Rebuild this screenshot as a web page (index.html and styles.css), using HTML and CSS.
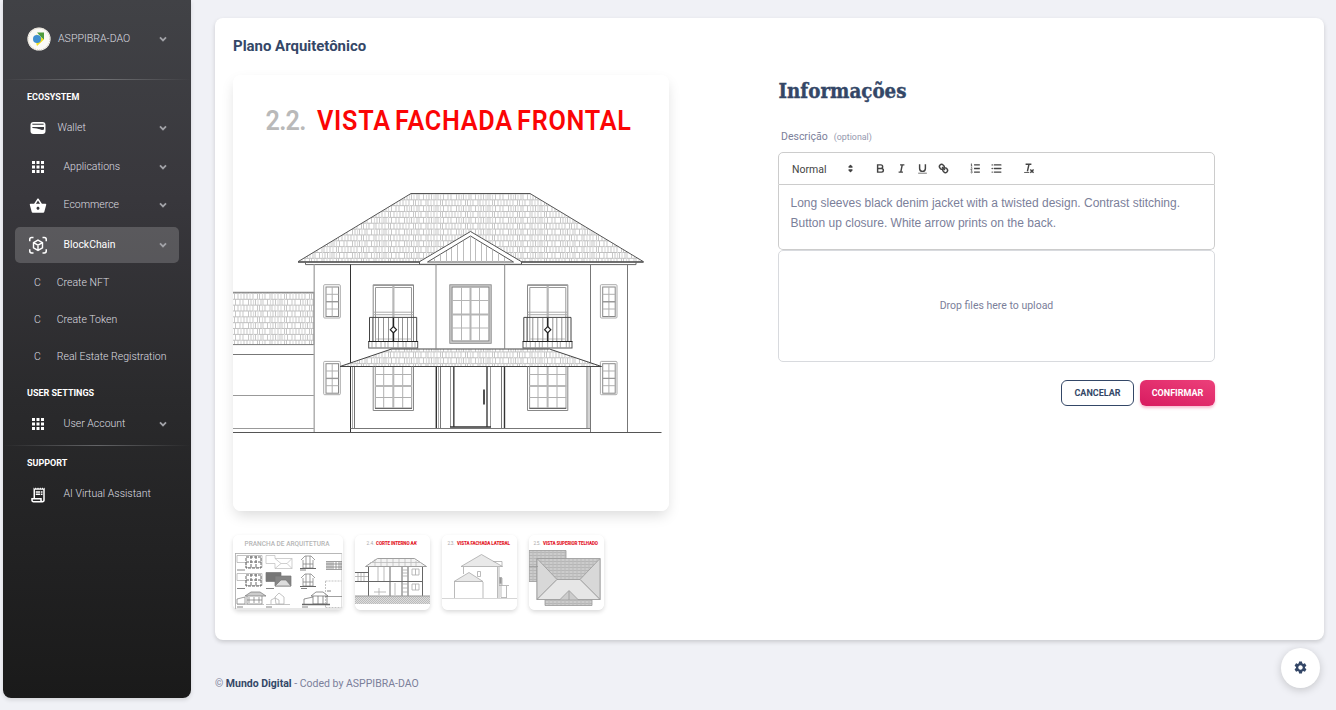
FILE: index.html
```
<!DOCTYPE html>
<html lang="pt">
<head>
<meta charset="utf-8">
<title>Plano Arquitetônico</title>
<link rel="stylesheet" href="styles.css">
</head>
<body>
<svg class="defs" width="0" height="0" aria-hidden="true">
  <defs>
    <symbol id="chev" viewBox="0 0 10 10"><path d="M2 3.400 5 6.400 8 3.400" fill="none" stroke="currentColor" stroke-width="1.800"/></symbol>
    <symbol id="apps" viewBox="0 0 24 24"><path fill="currentColor" d="M4 8h4V4H4v4zm6 12h4v-4h-4v4zm-6 0h4v-4H4v4zm0-6h4v-4H4v4zm6 0h4v-4h-4v4zm6-10v4h4V4h-4zm-6 4h4V4h-4v4zm6 6h4v-4h-4v4zm0 6h4v-4h-4v4z"/></symbol>
  </defs>
</svg>
<div class="app">
  <aside class="sidebar">
    <div class="profile">
      <svg class="avatar" viewBox="0 0 24 24"><circle cx="12" cy="12" r="11.600" fill="#fbfaf6"/><circle cx="12" cy="12" r="10.800" fill="none" stroke="#cfc4b2" stroke-width="1" stroke-dasharray="1 1"/><path fill="#4f9b3d" d="M10 5.500h7v7.500l-3-3z"/><path fill="#f4e01e" d="m9 7 8 5.500-7 6.500-.8-2.500 3.500-4z"/><circle cx="10" cy="12" r="4" fill="#3f8fd0"/></svg>
      <span class="label">ASPPIBRA-DAO</span><svg class="chev"><use href="#chev"/></svg>
    </div>
    <hr>
    <h6 class="section">ECOSYSTEM</h6>
    <div class="item wallet">
      <svg class="ic" viewBox="0 0 24 24"><rect x="2" y="4" width="20" height="16" rx="4" fill="#fff"/><path d="M4.500 7h15" stroke="#4a4a4f" stroke-width="1.500"/><path d="M4.500 10.500h15.500v3.500c-2 .8-3.500.6-5.500-.2s-5-1.300-10-1.800z" fill="#3a3a3f"/></svg>
      <span class="label">Wallet</span><svg class="chev"><use href="#chev"/></svg>
    </div>
    <div class="item apps"><svg class="ic"><use href="#apps"/></svg><span class="label">Applications</span><svg class="chev"><use href="#chev"/></svg></div>
    <div class="item shop">
      <svg class="ic" viewBox="0 0 24 24"><path fill="currentColor" fill-rule="evenodd" d="M22 9h-4.790l-4.380-6.560c-.19-.28-.51-.42-.83-.42s-.64.140-.83.430L6.790 9H2c-.550 0-1 .450-1 1 0 .090.010.180.040.270l2.540 9.270c.230.840 1 1.460 1.920 1.460h13c.920 0 1.690-.620 1.930-1.460l2.540-9.270L23 10c0-.550-.450-1-1-1zM12 4.800 14.800 9H9.200L12 4.800zM12 17c-1.100 0-2-.9-2-2s.9-2 2-2 2 .9 2 2-.9 2-2 2z"/></svg>
      <span class="label">Ecommerce</span><svg class="chev"><use href="#chev"/></svg>
    </div>
    <div class="item chain active">
      <svg class="ic" viewBox="0 0 24 24" fill="none" stroke="#fff" stroke-width="2"><path d="M1 7V4.500Q1 2 3.500 2H6M18 2h2.500Q23 2 23 4.500V7M23 17.500V20q0 2.500-2.500 2.500H18M6 22.500H3.500Q1 22.500 1 20v-2.500"/><path d="m12 5.500 6 3.400v6.800l-6 3.400-6-3.400V8.900zM6 8.900l6 3.400 6-3.400M12 12.300v6.800" stroke-width="1.900"/></svg>
      <span class="label">BlockChain</span><svg class="chev"><use href="#chev"/></svg>
    </div>
    <div class="sub"><b>C</b><span>Create NFT</span></div>
    <div class="sub"><b>C</b><span>Create Token</span></div>
    <div class="sub"><b>C</b><span>Real Estate Registration</span></div>
    <h6 class="section user">USER SETTINGS</h6>
    <div class="item"><svg class="ic"><use href="#apps"/></svg><span class="label">User Account</span><svg class="chev"><use href="#chev"/></svg></div>
    <hr class="second">
    <h6 class="section">SUPPORT</h6>
    <div class="item">
      <svg class="ic low" viewBox="0 0 24 24" fill="currentColor"><path d="M19.500 3.500 18 2l-1.500 1.500L15 2l-1.500 1.500L12 2l-1.500 1.500L9 2 7.500 3.500 6 2v14H3v3c0 1.660 1.340 3 3 3h12c1.660 0 3-1.340 3-3V2l-1.500 1.500zM15 20H6c-.550 0-1-.450-1-1v-1h10v2zm4-1c0 .550-.450 1-1 1s-1-.450-1-1v-3H8V5h11v14z"/><path d="M9 7h6v2H9zM16 7h2v2h-2zM9 10h6v2H9zM16 10h2v2h-2z"/></svg>
      <span class="label">AI Virtual Assistant</span>
    </div>
  </aside>

  <main class="main">
    <section class="card">
      <h5 class="title">Plano Arquitetônico</h5>
      <div class="cols">
        <div class="gallery">
          <svg class="plan" viewBox="233 75 436 436">
            <defs>
              <pattern id="tiles" x="298" y="193.500" width="52" height="11.700" patternUnits="userSpaceOnUse">
                <path d="M0 .5h52M0 6.300h52" stroke="#b8b8b8" stroke-width=".9"/>
                <path d="M2.500 0v6M5 0v6M9.500 0v6M15 0v6M17 0v6M21.500 0v6M27 0v6M29.500 0v6M34 0v6M36 0v6M41.500 0v6M46 0v6M49 0v6M1 6v6M7 6v6M11.500 6v6M13.500 6v6M19 6v6M24 6v6M26 6v6M32 6v6M38.500 6v6M40.500 6v6M44 6v6M50 6v6" stroke="#c2c2c2" stroke-width=".9"/>
                <path d="M7.500 0v6M12 0v6M24.500 0v6M32 0v6M38.500 0v6M4 6v6M16.500 6v6M29 6v6M35 6v6M47 6v6" stroke="#ddd" stroke-width="1.200"/>
              </pattern>
              <g id="smallwin" fill="none">
                <rect x="323.700" y="284.700" width="16.600" height="33.300" rx="1" stroke="#aaa"/>
                <rect x="326" y="287" width="12.500" height="29.500" stroke="#888"/>
                <path d="M332.200 287v29.500M326 294.300h12.500M326 309h12.500" stroke="#b0b0b0"/><path d="M326 301.700h12.500" stroke="#999" stroke-width="1.400"/>
              </g>
              <g id="lowwin" fill="none">
                <path d="M373.200 366.500v44h40.300v-44" stroke="#888"/><path d="M375.300 366.500v41.800h36.400v-41.800" stroke="#999"/>
                <path d="M375 408.300h37" stroke="#555"/>
                <path d="M383.700 367v41M402.700 367v41M375 374.500h37M375 397.500h37" stroke="#b0b0b0"/><path d="M393.300 367v41M375 386h37" stroke="#b8b8b8" stroke-width="2"/>
              </g>
              <g id="balcony" fill="none">
                <path d="M373.200 341v-56.200h40.300V341" stroke="#888"/><path d="M375.500 341v-53.500h36V341M373 285.500h40" stroke="#999"/>
                <path d="M393.400 286v55" stroke="#b8b8b8" stroke-width="2.200"/><path d="M373.500 312.200h40M373.500 314.700h40" stroke="#aaa"/><path d="M375.500 339h36" stroke="#bbb"/>
                <path d="M369.500 341v-23.600h47.200V341" stroke="#444"/>
                <path d="M372.500 318v23M378.500 318v23M383.500 318v23M388.500 318v23M398.500 318v23M402.500 318v23M407.500 318v23M413.500 318v23" stroke="#888" stroke-width=".9"/>
                <path d="M393.400 318v8.500M393.400 333v8.500" stroke="#222" stroke-width="1.300"/>
                <rect x="368.700" y="341.500" width="49" height="6.500" stroke="#555"/><path d="M368.500 341.500h49.500" stroke="#222"/>
                <path d="M372 342v6M376 342v6M381 342v6M385 342v6M388 342v6M393.400 342v6M398 342v6M403 342v6M406 342v6M412 342v6M415 342v6" stroke="#999" stroke-width=".8"/>
                <path d="m393.400 326.500 3.100 3.200-3.100 3.200-3.100-3.200z" fill="#fff" stroke="#222" stroke-width="1.200"/>
              </g>
            </defs>
            <rect x="233" y="75" width="436" height="436" fill="#fff"/>
            <g class="plan-title"><text transform="translate(265.500 129.700) scale(.94 1)" textLength="43.500" fill="#b9b9b9">2.2.</text><text transform="translate(317 129.700) scale(.94 1)" textLength="334" fill="#fb0505">VISTA FACHADA FRONTAL</text></g>
            <g fill="none">
              <path d="M298 261.700 411 193.500H530L643.500 261.700z" fill="url(#tiles)" stroke="#555"/>
              <path d="M298 262.300h345.500" stroke="#555"/><path d="M305.500 262v2.600h330.500v-2.600" stroke="#666"/>
              <path d="M419.500 264.300v-2.600l51-30.200 51 30.200v2.600z" fill="#fff" stroke="#555"/>
              <path d="M427.500 262 470.500 236l43 26z" stroke="#555"/>
              <path d="M434.500 258v4M440.500 254.500v7.500M446.500 251v11M451.500 248v14M457.500 244.500v17.500M463.500 241v21M470.500 237v25M475.500 239.500v22.500M481.500 243v19M486.500 246v16M492.500 249.500v12.500M498.500 253.500v8.500M504.500 257v5" stroke="#b5b5b5" stroke-width=".9"/>
              <rect x="232" y="292.300" width="82" height="52.300" fill="url(#tiles)" stroke="#777"/>
              <path d="M233 354.500h81" stroke="#777"/><path d="M233 395.500h81" stroke="#999"/>
              <path d="M233 428.500h81" stroke="#999"/>
              <path d="M314.200 264.500V432" stroke="#aaa" stroke-width="1.400"/><path d="M350.500 264.500V432" stroke="#333"/>
              <path d="M436 264.500v84M504.700 264.500v84" stroke="#888"/><path d="M590.500 264.500V432M627.500 264.500V432" stroke="#777"/>
              <use href="#smallwin"/><use href="#smallwin" y="76.700"/><use href="#smallwin" x="276.700"/><use href="#smallwin" x="276.700" y="76.700"/>
              <use href="#balcony"/><use href="#balcony" x="154.300"/>
              <rect x="450.500" y="285.500" width="40" height="57" stroke="#ccc" stroke-width="2"/><rect x="449.800" y="284.800" width="41.400" height="58.500" stroke="#888" stroke-width=".8"/><rect x="452" y="287" width="37" height="54" stroke="#777"/>
              <path d="M461.500 287v54M479.500 287v54M452 300.500h37M452 328h37" stroke="#b5b5b5"/><path d="M470.500 287v54M452 314.500h37" stroke="#b5b5b5" stroke-width="2"/>
              <path d="M340 366.500 391.500 349h158l52 17.500z" fill="#fff"/><path d="M340 366.500 391.500 349h158l52 17.500z" fill="url(#tiles)" stroke="#444"/>
              <use href="#lowwin"/><use href="#lowwin" x="154.300"/>
              <path d="M352.500 367v61M589 367v61" stroke="#aaa"/><path d="M354.500 367v61.500M587 367v61.500M440.500 367v61.500M501.500 367v61.500" stroke="#777"/>
              <path d="M436.300 367v61.500M504.500 367v61.500" stroke="#333" stroke-width="1.400"/><path d="M438.500 367v61" stroke="#aaa"/>
              <path d="M350.500 428.500h240" stroke="#777"/>
              <path d="M450.500 367v60M490.500 367v60" stroke="#999"/><path d="M453.800 367v60M487 367v60" stroke="#555" stroke-width="1.600"/>
              <path d="M450 427h41" stroke="#333" stroke-width="1.500"/><path d="M484 389.500v15" stroke="#333" stroke-width="1.700"/>
              <path d="M233 432.500h428.500" stroke="#555" stroke-width="1.200"/>
            </g>
          </svg>
          <div class="thumbs">
            <svg class="thumb wide" viewBox="233 535 110 75">
              <rect x="233" y="535" width="110" height="75" fill="#fff"/>
              <text x="244.500" y="546" textLength="85" lengthAdjust="spacingAndGlyphs" font-size="6.800" font-weight="500" fill="#b5b5b5">PRANCHA DE ARQUITETURA</text>
              <g fill="none" stroke="#777" stroke-width=".7">
                <path d="M235 553.500h107M235.500 553.500v55.500" stroke="#999"/><path d="M341.700 553.500v55.500" stroke="#ccc"/><path d="M234 609h108" stroke="#bbb"/>
                <path d="M237 555.500h25v12h-16v-5h-9zM237 573.500h25v12h-16v-5h-9z" stroke="#aaa"/>
                <path d="M246 557h15v11h-15zM246 562h15M251 556v12M256 556v12M246 575h15v11h-15zM246 580h15M251 574v12M256 574v12" stroke="#666" stroke-width="1" stroke-dasharray="3 1"/>
                <path d="M266 555.500h9v3h17v10h-17v-5h-9zM275 558.500l6 5 6 0 5-5M275 568.500l6-5M292 568.500l-5-5" stroke="#bbb"/>
                <path d="M266 572.500h15v9h-15z" fill="#777"/><path d="M275 576h16v10h-16z" fill="#858585"/><path d="m275 586 6-6h5l5 6z" fill="#ddd"/>
                <path d="m301 560 4-4h6l4 4M303 560v8h10v-8M306 556v12M310 556v12M303 564h10M301 578l4-4h6l4 4M303 578v8h10v-8M306 574v12M310 574v12M303 582h10" stroke="#777"/>
                <path d="M300 568.500h16M300 586.500h16" stroke="#666" stroke-width="1.200"/>
                <path d="m245 596 6-4h9l6 4z" fill="#ccc"/><path d="M247 596v8h15v-8M237 604v-5l8-2v7zM249 597v6M254 597v6M259 597v6M247 600h15" stroke="#777"/>
                <path d="m275 597 4-4 5 4v7h-8zM271 604v-4l4-2 4 2v4M266 604.500h24M237 604.500h27" stroke="#aaa"/>
                <path d="m311 596 5-4h7l5 4zM313 596v8h14v-8M318 596v8M323 596v8M304 604v-5l9-2" stroke="#666"/><path d="M302 604.500h28" stroke="#666" stroke-width="1.500"/>
                <path d="M326 561.500h16M326 569.500h16M327 562v7M329 562v7M331 562v7M333 562v7M336 562v7M339 562v7M341 562v7M326 564h16M326 567h16" stroke="#777"/>
                <path d="M325.500 581h16M325.500 581v26M325.500 607.500h16" stroke="#aaa" stroke-dasharray="2 1"/><path d="M325 596.500h17" stroke="#777"/>
                <path d="M237 570h8M237 588.500h8M266 588.500h8M300 570h6M301 588.500h6M237 607h6M266 607h6M302 607h6M327 591h4" stroke="#666" stroke-width=".8"/>
              </g>
            </svg>
            <svg class="thumb" viewBox="355 535 75 75">
              <defs><pattern id="hatch" width="2" height="2" patternUnits="userSpaceOnUse"><rect width="2" height="2" fill="#ddd"/><path d="M0 0h1v1H0zM1 1h1v1H1z" fill="#bbb"/></pattern></defs>
              <rect x="355" y="535" width="75" height="75" fill="#fff"/>
              <text x="366.500" y="544.500" textLength="8" font-size="4.800" fill="#aaa">2.4.</text><text class="red" x="376" y="544.500" textLength="41">CORTE INTERNO AA'</text>
              <g fill="none" stroke="#777" stroke-width=".8"><path d="m365.500 566.500 12-8h37l12 8z" fill="#f3f3f3" stroke="#888"/><path d="M370 562.500h51M375 559v7M381 559v7M387 559v7M393 559v7M399 559v7M405 559v7M411 559v7M416 561v5" stroke="#bbb"/>
              <path d="M368.500 567v29M355 572.500h13M355 581.500h68M390 567v29M402 567v29M408 567v29M422.500 567v29" stroke="#666" stroke-width="1"/>
              <path d="M378 567v14M384 567v14M355 576.500h13M358 573v8M361 573v8M364 573v8M402 570h6M402 573h6M402 576h6M402 584h6M402 588h6M402 592h6M412 569h7v6h-7zM412 584h7v6h-7zM415.500 569v6M415.500 584v6M395 583v12M374 592h12M379 588v7" stroke="#aaa"/></g>
              <rect x="355" y="596" width="75" height="8" fill="url(#hatch)"/><path d="M355 596h75" stroke="#999"/>
            </svg>
            <svg class="thumb" viewBox="442 535 75 75">
              <rect x="442" y="535" width="75" height="75" fill="#fff"/>
              <text x="447.500" y="544.500" textLength="7" font-size="4.800" fill="#aaa">2.3.</text><text class="red" x="457" y="544.500" textLength="53">VISTA FACHADA LATERAL</text>
              <path d="m461 566.500 20.500-12 21 12z" fill="#e9e9e9"/><path d="m454 581.500 15-9 14 9z" fill="#e9e9e9"/>
              <g fill="none" stroke="#aaa" stroke-width=".8"><path d="m461 566.500 20.500-12 21 12zM493 561.500h9v5M463.500 567v7M497.500 567v31M499 567v31M454 581.500l15-9 14 9zM454.500 582v16M483 582v16M477.500 571.500h3v5h-3zM499 578h3v7h-3M499 585.500h10M506.500 586v11.500M501 586v11.500h6"/><path d="M499.500 577.500h2v6h-2z" fill="#999"/><path d="M442 598.500h75" stroke="#ccc"/></g>
            </svg>
            <svg class="thumb" viewBox="529 535 75 75">
              <defs><pattern id="roof" width="4" height="3" patternUnits="userSpaceOnUse"><rect width="4" height="3" fill="#ccc"/><path d="M0 .5h4M1 1v2M3 0v1" stroke="#b0b0b0" stroke-width=".7"/></pattern></defs>
              <rect x="529" y="535" width="75" height="75" fill="#fff"/>
              <text x="533.500" y="544.500" textLength="7" font-size="4.800" fill="#aaa">2.5.</text><text class="red" x="543" y="544.500" textLength="55">VISTA SUPERIOR TELHADO</text>
              <g stroke="#999" stroke-width=".8"><path d="M529 550.500h37v31h-37zM545 599h47v6.500h-47z" fill="url(#roof)"/><path d="M537 558.500h63v41h-63z" fill="url(#roof)"/><path d="m537 558.500 20 21-20 20zM600 558.500l-20 21 20 20z" fill="#d8d8d8"/><path d="m537 599.500 20-20h23l20 20z" fill="#e6e6e6"/><path d="m560 599.500 9-9 9 9M569 591v9M529 566.500h9" fill="#ccc"/></g>
            </svg>
          </div>
        </div>
        <div class="info">
          <h3><svg width="160" height="36"><text x=".5" y="22.500" textLength="128" lengthAdjust="spacingAndGlyphs">Informações</text></svg></h3>
          <div class="desc"><span>Descrição</span><small>(optional)</small></div>
          <div class="toolbar">
            <span class="picker">Normal</span>
            <svg class="sort" viewBox="0 0 18 18"><path fill="#444" stroke="#444" stroke-width="2" stroke-linejoin="round" d="m7 11 2 2 2-2zM7 7l2-2 2 2z"/></svg>
            <svg viewBox="0 0 18 18"><path d="M5 4h4.500a2.500 2.500 0 0 1 0 5H5zM5 9h5.500a2.500 2.500 0 0 1 0 5H5z"/></svg>
            <svg viewBox="0 0 18 18"><path d="M7 4h6M5 14h6M8 14l2-10"/></svg>
            <svg viewBox="0 0 18 18"><path d="M5 3v6a4 4 0 0 0 8 0V3"/><path d="M3 15.500h12" stroke-width="1"/></svg>
            <svg viewBox="0 0 18 18"><path d="m7 7 4 4"/><path d="M8.900 4.577a3.476 3.476 0 0 1 .360 4.679A3.476 3.476 0 0 1 4.577 8.900C3.185 7.500 2.035 6.400 4.217 4.217S7.500 3.185 8.900 4.577zM13.423 9.100a3.476 3.476 0 0 0-4.679-.360 3.476 3.476 0 0 0 .360 4.679c1.392 1.392 2.500 2.542 4.679.360s1.031-3.287-.360-4.679z"/></svg>
            <svg class="list" viewBox="0 0 18 18"><path d="M7 4h8M7 9h8M7 14h8"/><path stroke-width="1" d="M2.500 5.500h2M3.500 5.500v-3l-1 .5M4.500 10.500h-2c0-.8 1.850-1.200 1.850-2 0-1-1.400-1.200-1.850-.4M2.500 14.600c.5 1 1.950.8 1.950-.2 0-.6-.5-.9-1-.9.500 0 1-.2 1-.9 0-.9-1.400-1-1.950-.2"/></svg>
            <svg viewBox="0 0 18 18"><path d="M6 4h9M6 9h9M6 14h9M3 4h.1M3 9h.1M3 14h.1" stroke-linecap="round"/></svg>
            <svg class="clean" viewBox="0 0 18 18"><path d="M5 3h8M9.700 3 7.500 13M11.500 10.500l4.500 4.500M16 10.500 11.500 15"/><path d="M3 14.500h7" stroke-width="1.200"/></svg>
          </div>
          <div class="editor">Long sleeves black denim jacket with a twisted design. Contrast stitching. Button up closure. White arrow prints on the back.</div>
          <div class="drop">Drop files here to upload</div>
          <div class="actions"><button class="cancel">CANCELAR</button><button class="confirm">CONFIRMAR</button></div>
        </div>
      </div>
    </section>
    <footer>© <strong>Mundo Digital</strong> - Coded by ASPPIBRA-DAO</footer>
  </main>
</div>
<button class="settings" aria-label="Settings"><svg viewBox="0 0 24 24"><path fill="#344767" d="M19.140 12.940c.040-.3.060-.610.060-.940 0-.320-.020-.640-.070-.940l2.030-1.580c.180-.140.230-.410.120-.610l-1.920-3.320c-.120-.220-.370-.290-.590-.220l-2.390.960c-.5-.380-1.030-.7-1.620-.940l-.360-2.540c-.040-.240-.240-.410-.480-.410h-3.840c-.240 0-.430.170-.470.410l-.360 2.540c-.590.240-1.130.570-1.620.940l-2.390-.960c-.220-.080-.470 0-.590.220L2.740 8.870c-.120.210-.080.470.120.610l2.030 1.580c-.050.300-.090.630-.090.940s.020.640.070.940l-2.030 1.580c-.180.140-.230.410-.120.610l1.920 3.320c.120.220.370.290.590.220l2.390-.960c.5.380 1.030.7 1.620.940l.360 2.540c.050.240.240.410.480.410h3.840c.240 0 .440-.170.470-.410l.360-2.540c.590-.240 1.130-.560 1.620-.940l2.390.960c.220.080.470 0 .590-.220l1.920-3.320c.120-.220.070-.470-.120-.610l-2.010-1.580zM12 15.600c-1.980 0-3.600-1.620-3.600-3.600s1.620-3.600 3.600-3.600 3.600 1.620 3.600 3.600-1.620 3.600-3.600 3.600z"/></svg></button>
</body>
</html>
```
FILE: styles.css
```
* { box-sizing: border-box; }
body { margin: 0; height: 710px; overflow: hidden; background: #f0f1f6; color: #7b809a; font-family: Roboto, "Liberation Sans", sans-serif; font-size: 10.5px; }
h3, h5, h6 { margin: 0; }
.defs { display: block; height: 0; }
.app { display: flex; gap: 24px; height: 710px; padding: 0 12px 0 3px; }

.sidebar { width: 188px; height: 698px; flex: none; color: #fff; background: linear-gradient(180deg, #414246 0, #38373c 200px, #2a2a2c 400px, #1a1a1a 698px); border-radius: 0 0 8px 8px; box-shadow: 0 2px 4px rgba(0,0,0,.12); }
.profile { display: flex; align-items: center; height: 79px; padding: 0 22px 1px 24px; }
.avatar { width: 24px; height: 24px; margin-right: 7px; }
.label { flex: 1; font-weight: 300; font-size: 10.500px; color: #dedee0; white-space: nowrap; }
.profile .label { padding-bottom: 1px; font-size: 10.600px; }
.chev { width: 10px; height: 10px; color: #a2a3a8; }
.profile .chev { margin-right: 1px; }
.sidebar hr { height: 1px; margin: 0; border: 0; background: linear-gradient(90deg, transparent, #737477, transparent); }
.sidebar .second { margin-top: 3px; opacity: .8; }
.section { height: 26px; margin-top: 4px; padding-left: 24px; font-size: 9px; font-weight: 700; line-height: 26px; }
.section.user { margin-top: 5px; }
.item { display: flex; align-items: center; height: 36px; margin: 0 12px; padding: 0 11px 0 14px; border-radius: 5px; }
.ic { width: 18px; height: 18px; margin-right: 16.500px; }
.item .label { padding-bottom: 1px; }
.wallet .ic { margin-right: 10.500px; }
.apps { margin-top: 3px; }
.shop { margin-top: 2px; }
.shop .ic { margin-top: 2px; }
.chain { margin-top: 4px; margin-bottom: 1px; }
.active { background: rgba(255,255,255,.18); }
.active .label { font-weight: 400; color: #fff; padding-bottom: 2px; font-size: 10.400px; }
.low { position: relative; top: 1px; }
.sub { display: flex; align-items: center; height: 37px; padding-left: 31px; font-weight: 300; color: #dedee0; font-size: 10.500px; }
.sub b { width: 22.800px; font-weight: 300; }

.main { flex: 1; padding-top: 18px; }
.card { height: 622px; padding: 18px; background: #fff; border-radius: 8px; box-shadow: 0 2px 4px rgba(0,0,0,.16); }
.title { height: 39px; color: #344767; font-size: 14.950px; line-height: 20px; font-weight: 700; }
.cols { display: grid; grid-template-columns: 436px 437px; column-gap: 109px; }
.plan { display: block; width: 436px; height: 436px; border-radius: 8px; box-shadow: 0 6px 14px -2px rgba(0,0,0,.15); }
.plan-title { font: 600 26.800px Roboto, sans-serif; word-spacing: -3px; }
.thumbs { display: flex; gap: 12px; margin-top: 24px; }
.thumb { width: 75px; height: 75px; border-radius: 6px; box-shadow: 0 2px 4px rgba(0,0,0,.15); font-family: Roboto, sans-serif; }
.thumb.wide { width: 110px; }
.red { fill: #e3202c; font-size: 4.600px; font-weight: 900; }

.info h3 { height: 51px; }
.info h3 svg { display: block; overflow: visible; }
.info h3 text { fill: #344767; stroke: #344767; stroke-width: .4px; font: 700 21px "Roboto Slab", "DejaVu Serif", serif; }
.desc { display: flex; align-items: center; gap: 6px; height: 20px; padding-left: 3px; }
.desc small { font-size: 8.900px; opacity: .8; padding-top: 1px; }
.toolbar { display: flex; align-items: center; height: 33px; margin-top: 6px; padding: 0 13px; border: 1px solid #ccc; border-radius: 5px 5px 0 0; }
.toolbar svg { width: 13px; height: 13px; margin-right: 8px; fill: none; stroke: #444; stroke-width: 2; }
.toolbar .sort { margin-right: 17px; }
.toolbar .list { margin-left: 11px; }
.toolbar .clean { margin-left: 11px; }
.picker { width: 52px; color: #444; font-size: 10.500px; padding-top: 1px; }
.editor { height: 65px; padding: 8px 12px 0 11.500px; border: 1px solid #ccc; border-top: 0; border-radius: 0 0 5px 5px; font: 12px/20px "Liberation Sans", Arial, sans-serif; }
.drop { display: grid; place-items: center; height: 112px; padding-bottom: 2px; border: 1px solid #d8dade; border-radius: 5px; }
.actions { display: flex; justify-content: flex-end; gap: 6px; margin-top: 18px; }
.actions button { height: 26px; padding: 0; border-radius: 6px; font: 700 9px Roboto, sans-serif; }
.cancel { width: 73px; color: #344767; background: #fff; border: 1px solid #344767; }
.confirm { width: 75px; color: #fff; background: linear-gradient(195deg, #ec407a, #d81b60); border: 0; box-shadow: 0 2px 3px rgba(233,30,99,.3); }
footer { margin-top: 36px; line-height: 15px; }
footer strong { color: #344767; }
.settings { position: absolute; left: 1281px; top: 648px; width: 39px; height: 40px; padding: 0 1px 1px 0; border: 0; border-radius: 50%; background: #fff; box-shadow: 0 2px 8px rgba(0,0,0,.18); display: grid; place-items: center; }
.settings svg { width: 15px; height: 15px; }
```
